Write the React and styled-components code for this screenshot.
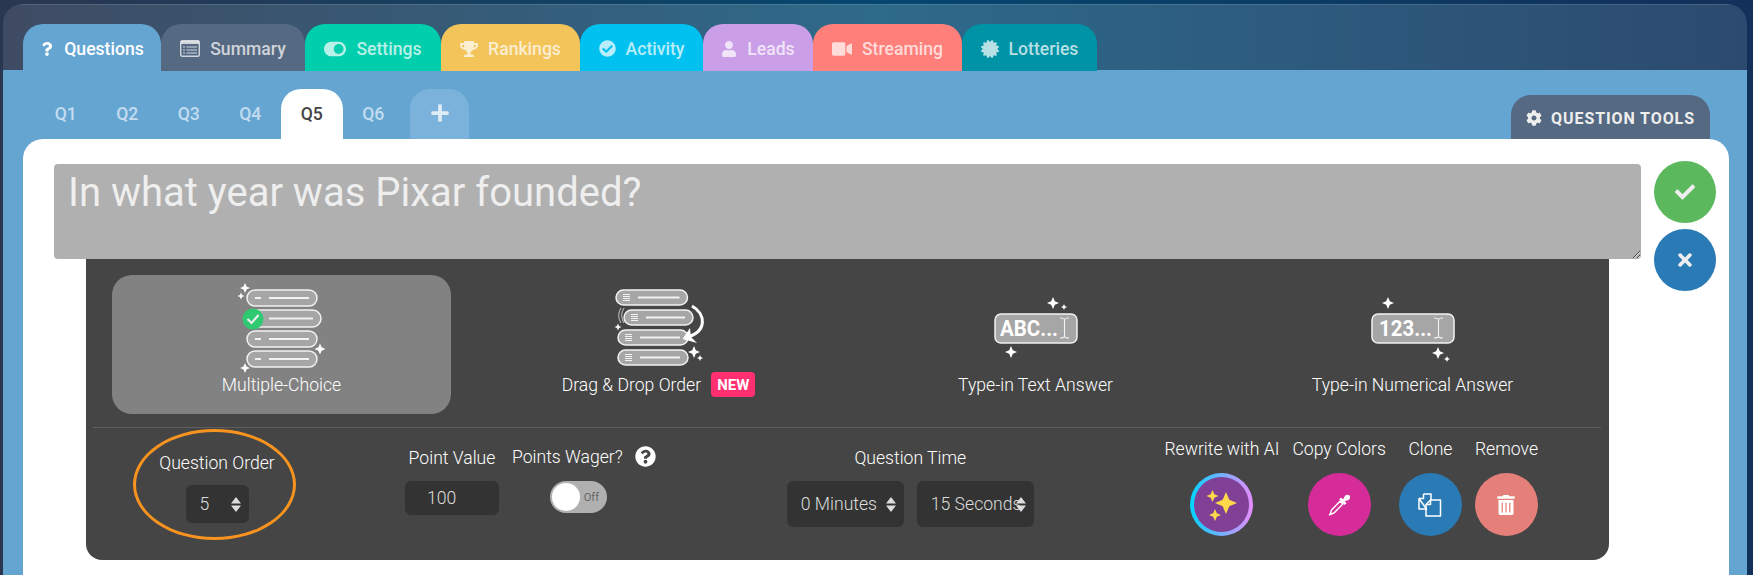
import React from 'react';
import styled, { createGlobalStyle } from 'styled-components';
import {
  FaQuestion, FaToggleOn, FaTrophy, FaCheckCircle, FaUser, FaVideo, FaCertificate,
  FaPlus, FaCog, FaCheck, FaTimes, FaQuestionCircle, FaTrashAlt,
} from 'react-icons/fa';

const GlobalStyle = createGlobalStyle`
  html, body { margin: 0; padding: 0; height: 100%; overflow: hidden; }
  body { font-family: Roboto, "Liberation Sans", sans-serif; }
  * { box-sizing: border-box; }
`;

const Page = styled.div`
  height: 575px;
  padding: 4px 6px 0 3px;
  background: linear-gradient(90deg, #2a3750 0%, #05466f 50%, #12305a 100%);
`;

const Frame = styled.div`
  height: 100%;
  display: flex;
  flex-direction: column;
  border-radius: 20px 20px 0 0;
  overflow: hidden;
`;

const Header = styled.div`
  height: 66px;
  padding: 20px 0 0 20px;
  display: flex;
  align-items: flex-start;
  border-top: 1px solid rgba(255, 255, 255, 0.12);
  background: linear-gradient(90deg, #3f4b63 0%, #2e6a8a 50%, #2c4a6f 100%);
`;

const Tab = styled.div`
  height: 47px;
  position: relative;
  z-index: 1;
  margin-top: -1px;
  padding-top: 2px;
  width: ${(p) => p.$w}px;
  display: flex;
  align-items: center;
  justify-content: center;
  gap: 10px;
  border-radius: 20px 20px 0 0;
  background: ${(p) => p.$bg};
  color: ${(p) => (p.$active ? '#fff' : 'rgba(255, 255, 255, 0.72)')};
  font-size: 17.6px;
  font-weight: 500;
  white-space: nowrap;
`;

const Body = styled.div`
  flex: 1;
  padding-top: 19px;
  display: flex;
  flex-direction: column;
  background: #65a5d2;
`;

const SubTabs = styled.div`
  height: 50px;
  padding: 0 37px 0 32px;
  display: flex;
  align-items: flex-end;
`;

const SubTab = styled.div`
  width: 61.5px;
  height: 50px;
  display: flex;
  align-items: center;
  justify-content: center;
  border-radius: 20px 20px 0 0;
  background: ${(p) => (p.$active ? '#fff' : 'transparent')};
  color: ${(p) => (p.$active ? '#444' : '#c3dcef')};
  font-size: 17.6px;
  font-weight: 500;
`;

const AddTab = styled.div`
  width: 59px;
  height: 50px;
  margin-left: 6px;
  padding-bottom: 2px;
  display: flex;
  align-items: center;
  justify-content: center;
  border-radius: 20px 20px 0 0;
  background: #7ab2dc;
  color: #dcebf6;
  font-size: 20px;
`;

const ToolsTab = styled.div`
  width: 199px;
  height: 44px;
  margin-left: auto;
  padding-top: 2px;
  display: flex;
  align-items: center;
  justify-content: center;
  gap: 9px;
  border-radius: 20px 20px 0 0;
  background: #566982;
  color: #eee;
  font-size: 16px;
  font-weight: 700;
  letter-spacing: 0.9px;
`;

const Card = styled.div`
  flex: 1;
  margin: 0 18px 0 20px;
  padding: 25px 0 0 31px;
  border-radius: 20px 20px 0 0;
  background: #fff;
`;

const EditorRow = styled.div`
  height: 95px;
  display: flex;
  gap: 13px;
`;

const QuestionInput = styled.textarea`
  display: block;
  width: 1587px;
  height: 95px;
  padding: 2px 14px;
  border: none;
  border-radius: 4px;
  outline: none;
  background: #b0b0b0;
  color: #eee;
  font-family: Roboto, sans-serif;
  font-size: 40px;
  font-weight: 400;
  line-height: 54px;
`;

const SideButtons = styled.div`
  height: 131px;
  margin-top: -3px;
  display: flex;
  flex-direction: column;
  gap: 6px;
`;

const SideButton = styled.div`
  width: 62px;
  height: 62px;
  display: flex;
  align-items: center;
  justify-content: center;
  border-radius: 50%;
  background: ${(p) => p.$bg};
  color: #eee;
  font-size: 20px;
`;

const Panel = styled.div`
  width: 1523px;
  height: 301px;
  margin-left: 32px;
  padding: 16px 8px 0 7px;
  border-radius: 0 0 16px 16px;
  background: #454545;
  color: #fff;
`;

const Options = styled.div`
  display: grid;
  grid-template-columns: repeat(4, 1fr);
  padding-bottom: 13px;
  border-bottom: 1px solid #5e5e5e;
`;

const Option = styled.div`
  height: 139px;
  margin: 0 19px;
  padding-top: 3px;
  display: flex;
  flex-direction: column;
  align-items: center;
  border-radius: 20px;
  background: ${(p) => (p.$active ? '#828282' : 'transparent')};
  font-size: 17.6px;
  font-weight: 300;
`;

const IconSvg = styled.svg`
  width: 100px;
  height: 100px;
  flex: none;
`;

const OptionLabel = styled.div`
  height: 19px;
  margin-top: -3px;
  display: flex;
  align-items: center;
  gap: 10px;
  white-space: nowrap;
`;

const NewBadge = styled.span`
  height: 25px;
  padding: 0 6px;
  display: flex;
  align-items: center;
  border-radius: 4px;
  background: #ff2f72;
  color: #fff;
  font-size: 15px;
  font-weight: 700;
`;

const Controls = styled.div`
  display: flex;
  align-items: flex-start;
  padding-left: 40px;
`;

const FieldLabel = styled.div`
  height: 20px;
  line-height: 20px;
  font-size: 17.6px;
  font-weight: 300;
  white-space: nowrap;
  text-align: center;
`;

const OrderRing = styled.div`
  width: 163px;
  height: 111px;
  margin-top: 1px;
  padding: 21px 0 0 5px;
  display: flex;
  flex-direction: column;
  align-items: center;
  gap: 12px;
  border: 3px solid #f7931e;
  border-radius: 50%;
`;

const Field = styled.div`
  margin-left: ${(p) => p.$ml}px;
  margin-top: ${(p) => p.$mt}px;
  display: flex;
  flex-direction: column;
  align-items: ${(p) => p.$align || 'center'};
  gap: ${(p) => p.$gap || 13}px;
`;

const SelectBox = styled.div`
  width: ${(p) => p.$w}px;
  height: ${(p) => p.$h}px;
  padding: 0 8px 0 14px;
  display: flex;
  align-items: center;
  border-radius: 6px;
  background: #333;
  color: #ddd;
  font-size: 17.6px;
  font-weight: 300;
  white-space: nowrap;
`;

const SelectText = styled.span`
  flex: 1;
  min-width: 0;
`;

const Arrows = styled.svg`
  width: 10px;
  height: 15px;
  flex: none;
`;

const PointInput = styled.div`
  width: 94px;
  height: 34px;
  padding-left: 22px;
  display: flex;
  align-items: center;
  border-radius: 6px;
  background: #333;
  color: #ddd;
  font-size: 17.6px;
  font-weight: 300;
`;

const WagerRow = styled.div`
  height: 21px;
  display: flex;
  align-items: center;
  gap: 12px;
  font-size: 21px;
`;

const Toggle = styled.div`
  width: 57px;
  height: 32px;
  margin-left: 38px;
  padding: 0 8px 0 2px;
  display: flex;
  align-items: center;
  justify-content: space-between;
  border-radius: 16px;
  background: #b0b0b0;
  color: #666;
  font-size: 11px;
`;

const Knob = styled.div`
  width: 28px;
  height: 28px;
  border-radius: 50%;
  background: #fff;
`;

const TimeSelects = styled.div`
  display: flex;
  gap: 13px;
`;

const Actions = styled.div`
  margin: 11px 63px 0 auto;
  display: flex;
  gap: 13px;
`;

const Action = styled.div`
  min-width: 63px;
  display: flex;
  flex-direction: column;
  align-items: center;
  gap: 14px;
`;

const ActionButton = styled.div`
  width: 63px;
  height: 63px;
  display: flex;
  align-items: center;
  justify-content: center;
  border-radius: 50%;
  background: ${(p) => p.$bg};
  color: #fff;
  font-size: 20px;
`;

const AiButton = styled(ActionButton)`
  padding: 4px;
  background: linear-gradient(90deg, #00d5ff 0%, #e88cff 100%);
`;

const AiInner = styled.div`
  width: 100%;
  height: 100%;
  display: flex;
  align-items: center;
  justify-content: center;
  border-radius: 50%;
  background: #7f4096;
`;

const Sparkle = ({ x, y, r, fill = '#fff' }) => {
  const k = r * 0.3;
  return (
    <path
      fill={fill}
      d={`M${x} ${y - r}L${x + k} ${y - k}L${x + r} ${y}L${x + k} ${y + k}L${x} ${y + r}L${x - k} ${y + k}L${x - r} ${y}L${x - k} ${y - k}Z`}
    />
  );
};

const Pill = ({ x, y, w, h = 16, lines }) => (
  <g>
    <rect x={x} y={y} width={w} height={h} rx={h / 2} fill="#a6a6a6" stroke="#f2f2f2" strokeWidth="1.5" />
    {lines ? (
      <path
        stroke="#f2f2f2"
        strokeWidth="1.1"
        d={`M${x + 7} ${y + h / 2 - 3}h7M${x + 7} ${y + h / 2 - 1}h7M${x + 7} ${y + h / 2 + 1}h7M${x + 7} ${y + h / 2 + 3}h7`}
      />
    ) : (
      <path stroke="#f2f2f2" strokeWidth="2" d={`M${x + 8} ${y + h / 2}h6`} />
    )}
    <path stroke="#f2f2f2" strokeWidth="2" d={`M${x + 22} ${y + h / 2}h${w - 30}`} />
  </g>
);

const MultipleChoiceIcon = () => (
  <IconSvg viewBox="1 0 100 100">
    <Pill x={16} y={12} w={70} />
    <Pill x={16} y={32} w={74} h={17} />
    <Pill x={16} y={53} w={70} />
    <Pill x={16} y={73} w={70} />
    <circle cx="22" cy="41" r="10.5" fill="#2ec971" />
    <path d="M16.5 41l4 4 7-8" fill="none" stroke="#eee" strokeWidth="2.2" />
    <Sparkle x={14} y={10} r={5} />
    <Sparkle x={10} y={18} r={3.5} />
    <Sparkle x={89} y={71} r={5.5} />
    <Sparkle x={14} y={90} r={5} />
  </IconSvg>
);

const DragOrderIcon = () => (
  <IconSvg viewBox="0 0 100 100">
    <Pill x={7} y={12} w={71.5} h={15} lines />
    <Pill x={15} y={32} w={69} h={15} lines />
    <Pill x={9} y={52} w={70} h={15} lines />
    <Pill x={9} y={72} w={70} h={15} lines />
    <path d="M83 28C97 36 99 54 76 60" fill="none" stroke="#fff" strokeWidth="3" />
    <path d="M73.5 61L81 50L82 59L88 65Z" fill="#fff" />
    <path d="M12 30C9 35 9 40 12 45M15 30C12 35 12 40 15 45" fill="none" stroke="#ddd" strokeWidth="0.9" />
    <Sparkle x={85} y={74} r={6} />
    <Sparkle x={91} y={80} r={3} />
    <Sparkle x={9} y={49} r={3.5} />
  </IconSvg>
);

const TypeInIcon = ({ text, textX, textW, cursorX, sparkles }) => (
  <IconSvg viewBox="0 0 100 100">
    <rect x="9" y="36" width="82" height="29" rx="6" fill="#a6a6a6" stroke="#f2f2f2" strokeWidth="1.5" />
    <text
      x={textX}
      y="58"
      fill="#fff"
      fontFamily="Roboto, sans-serif"
      fontSize="22"
      fontWeight="700"
      textLength={textW}
      lengthAdjust="spacingAndGlyphs"
    >
      {text}
    </text>
    <path d={`M${cursorX - 4.5} 40Q${cursorX} 40 ${cursorX} 42V58Q${cursorX} 60 ${cursorX - 4.5} 60M${cursorX + 4.5} 40Q${cursorX} 40 ${cursorX} 42V58Q${cursorX} 60 ${cursorX + 4.5} 60`} fill="none" stroke="#f2f2f2" strokeWidth="1.1" />
    {sparkles.map(([x, y, r]) => <Sparkle key={`${x}-${y}`} x={x} y={y} r={r} />)}
  </IconSvg>
);

const SummaryIcon = () => (
  <svg width="20" height="17" viewBox="0 0 20 17">
    <rect x="0.7" y="0.7" width="18.6" height="15.6" rx="1.5" fill="none" stroke="currentColor" strokeWidth="1.4" />
    <path fill="currentColor" d="M1 1h18v3H1z" />
    <path stroke="currentColor" strokeWidth="1.2" d="M3 7h2M6.5 7h10.5M3 10h2M6.5 10h10.5M3 13h2M6.5 13h10.5" />
  </svg>
);

const DropperIcon = () => (
  <svg width="24" height="24" viewBox="0 0 24 24">
    <path fill="#fff" d="M14 4.5L16 6.5L18 2.8C19.3 1.3 21.6 1.5 22.5 2.5C23.500 3.7 23.3 5.7 21.5 7L17.6 8.2L19.5 10.3L17.6 12L12.2 6.4Z" />
    <path fill="none" stroke="#fff" strokeWidth="1.5" strokeLinejoin="round" d="M13 8.2L5 16.5C4 17.5 4 19 3.5 20.5L2.5 22L4 21C5.5 20.5 6.5 20.5 7.5 19.5L15.8 11Z" />
  </svg>
);

const CloneIcon = () => (
  <svg width="24" height="24" viewBox="0 0 24 24" fill="none" stroke="#fff" strokeWidth="1.5" strokeLinejoin="round">
    <path d="M5.5 1H13V7M8.5 16H1V5.5Z" />
    <path d="M5.5 1V5.5H1" />
    <path d="M12.5 7H22.5V23H8V11.5Z" />
    <path d="M12.5 7V11.5H8" />
  </svg>
);

const AiSparkles = () => (
  <svg width="36" height="36" viewBox="0 0 36 36">
    <Sparkle x={22} y={16} r={11} fill="#ffd84a" />
    <Sparkle x={8.5} y={9} r={6} fill="#ffd84a" />
    <Sparkle x={11} y={28} r={6} fill="#ffd84a" />
  </svg>
);

const SelectArrows = () => (
  <Arrows viewBox="0 0 10 15">
    <path fill="#ddd" d="M5 0l5 6.5H0zM5 15L0 8.5h10z" />
  </Arrows>
);

const tabs = [
  { label: 'Questions', bg: '#65a5d2', w: 138, icon: <FaQuestion size={14} />, active: true },
  { label: 'Summary', bg: '#566982', w: 144, icon: <SummaryIcon /> },
  { label: 'Settings', bg: '#00cead', w: 136, icon: <FaToggleOn size={22} /> },
  { label: 'Rankings', bg: '#f2c45a', w: 139, icon: <FaTrophy size={18} /> },
  { label: 'Activity', bg: '#00c1ef', w: 123, icon: <FaCheckCircle size={17} /> },
  { label: 'Leads', bg: '#cb9fe8', w: 110, icon: <FaUser size={16} /> },
  { label: 'Streaming', bg: '#ff807a', w: 149, icon: <FaVideo size={20} /> },
  { label: 'Lotteries', bg: '#0092a5', w: 135, icon: <FaCertificate size={18} /> },
];

const questions = ['Q1', 'Q2', 'Q3', 'Q4', 'Q5', 'Q6'];

const App = () => (
  <>
    <GlobalStyle />
    <Page>
      <Frame>
        <Header>
          {tabs.map((t) => (
            <Tab key={t.label} $bg={t.bg} $w={t.w} $active={t.active}>
              {t.icon}
              {t.label}
            </Tab>
          ))}
        </Header>
        <Body>
          <SubTabs>
            {questions.map((q) => (
              <SubTab key={q} $active={q === 'Q5'}>{q}</SubTab>
            ))}
            <AddTab><FaPlus /></AddTab>
            <ToolsTab><FaCog size={16} />QUESTION TOOLS</ToolsTab>
          </SubTabs>
          <Card>
            <EditorRow>
              <QuestionInput readOnly defaultValue="In what year was Pixar founded?" />
              <SideButtons>
                <SideButton $bg="#5cb85c"><FaCheck /></SideButton>
                <SideButton $bg="#2a7ab5"><FaTimes /></SideButton>
              </SideButtons>
            </EditorRow>
            <Panel>
              <Options>
                <Option $active>
                  <MultipleChoiceIcon />
                  <OptionLabel>Multiple-Choice</OptionLabel>
                </Option>
                <Option>
                  <DragOrderIcon />
                  <OptionLabel>Drag &amp; Drop Order <NewBadge>NEW</NewBadge></OptionLabel>
                </Option>
                <Option>
                  <TypeInIcon text="ABC..." textX={14} textW={58} cursorX={78.5} sparkles={[[67, 25, 6], [78, 29, 3], [25, 74, 6]]} />
                  <OptionLabel>Type-in Text Answer</OptionLabel>
                </Option>
                <Option>
                  <TypeInIcon text="123..." textX={16} textW={53} cursorX={75.5} sparkles={[[25, 25, 6], [75, 75, 6], [84, 81, 3]]} />
                  <OptionLabel>Type-in Numerical Answer</OptionLabel>
                </Option>
              </Options>
              <Controls>
                <OrderRing>
                  <FieldLabel>Question Order</FieldLabel>
                  <SelectBox $w={63} $h={38}>
                    <SelectText>5</SelectText>
                    <SelectArrows />
                  </SelectBox>
                </OrderRing>
                <Field $ml={109} $mt={20}>
                  <FieldLabel>Point Value</FieldLabel>
                  <PointInput>100</PointInput>
                </Field>
                <Field $ml={13} $mt={18} $gap={14} $align="flex-start">
                  <WagerRow>
                    <FieldLabel>Points Wager?</FieldLabel>
                    <FaQuestionCircle />
                  </WagerRow>
                  <Toggle><Knob />Off</Toggle>
                </Field>
                <Field $ml={131} $mt={20}>
                  <FieldLabel>Question Time</FieldLabel>
                  <TimeSelects>
                    <SelectBox $w={117} $h={46}>
                      <SelectText>0 Minutes</SelectText>
                      <SelectArrows />
                    </SelectBox>
                    <SelectBox $w={117} $h={46}>
                      <SelectText>15 Seconds</SelectText>
                      <SelectArrows />
                    </SelectBox>
                  </TimeSelects>
                </Field>
                <Actions>
                  <Action>
                    <FieldLabel>Rewrite with AI</FieldLabel>
                    <AiButton><AiInner><AiSparkles /></AiInner></AiButton>
                  </Action>
                  <Action>
                    <FieldLabel>Copy Colors</FieldLabel>
                    <ActionButton $bg="#d62c9a"><DropperIcon /></ActionButton>
                  </Action>
                  <Action>
                    <FieldLabel>Clone</FieldLabel>
                    <ActionButton $bg="#2a7ab5"><CloneIcon /></ActionButton>
                  </Action>
                  <Action>
                    <FieldLabel>Remove</FieldLabel>
                    <ActionButton $bg="#e57f7a"><FaTrashAlt /></ActionButton>
                  </Action>
                </Actions>
              </Controls>
            </Panel>
          </Card>
        </Body>
      </Frame>
    </Page>
  </>
);

export default App;
